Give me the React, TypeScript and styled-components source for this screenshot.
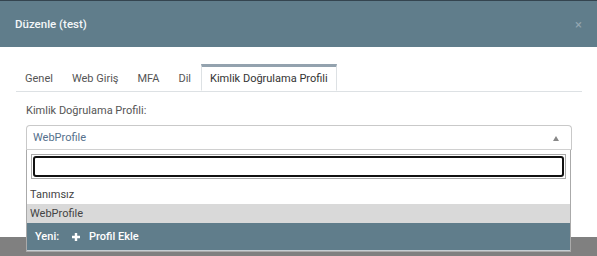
import React from "react";
import styled, { createGlobalStyle } from "styled-components";

const Global = createGlobalStyle`
  html, body { margin: 0; padding: 0; }
  body {
    background: #808080;
    font-family: Roboto, "Liberation Sans", sans-serif;
    width: 597px;
    height: 256px;
    overflow: hidden;
  }
`;

const Modal = styled.div`
  width: 597px;
  height: 237px;
  background: #fff;
  display: flex;
  flex-direction: column;
`;

const Header = styled.div`
  height: 47px;
  box-sizing: border-box;
  border-top: 1px solid #34444f;
  background: #607d8b;
  display: flex;
  align-items: center;
  justify-content: space-between;
  padding: 0 15px 0 15px;
`;

const Title = styled.div`
  color: #f4f7f9;
  font-size: 11.5px;
  font-weight: 500;
`;

const Close = styled.span`
  color: #93a6b0;
  font-size: 13px;
  line-height: 1;
`;

const Body = styled.div`
  padding: 17px 15px 0 16px;
`;

const Tabs = styled.div`
  display: flex;
  border-bottom: 1px solid #dde1e4;
  height: 27px;
`;

const Tab = styled.div<{ $active?: boolean }>`
  box-sizing: border-box;
  height: 27px;
  padding: 0 8px;
  margin-bottom: -1px;
  margin-right: 1px;
  display: flex;
  align-items: center;
  font-size: 11px;
  color: ${(p) => (p.$active ? "#333" : "#555")};
  background: #fff;
  border: 1px solid ${(p) => (p.$active ? "#dde1e4" : "transparent")};
  border-top: 3px solid ${(p) => (p.$active ? "#93a2ae" : "transparent")};
  border-bottom-color: ${(p) => (p.$active ? "#fff" : "transparent")};
`;

const Field = styled.div`
  padding: 12px 10px 0 10px;
`;

const Label = styled.div`
  font-size: 11px;
  color: #555;
  height: 13px;
  line-height: 13px;
  margin-bottom: 8px;
`;

const SelectWrap = styled.div`
  position: relative;
`;

const Select = styled.div`
  box-sizing: border-box;
  height: 25px;
  border: 1px solid #c9c9c9;
  border-bottom-color: #d0d0d0;
  border-radius: 4px 4px 0 0;
  display: flex;
  align-items: center;
  justify-content: space-between;
  padding: 0 12px 0 6px;
  font-size: 11px;
  color: #55708c;
`;

const Arrow = styled.span`
  width: 0;
  height: 0;
  border-left: 3.5px solid transparent;
  border-right: 3.5px solid transparent;
  border-bottom: 5px solid #888;
  margin-top: 1px;
`;

const Dropdown = styled.div`
  position: absolute;
  top: 100%;
  left: 0;
  right: 1px;
  box-sizing: border-box;
  background: #fff;
  border: 1px solid #aaa;
  border-top: none;
  display: flex;
  flex-direction: column;
`;

const SearchBox = styled.div`
  padding: 4px 4px 6px 4px;
`;

const Search = styled.div`
  box-sizing: border-box;
  height: 25px;
  border: 1px solid #aaa;
  padding: 1px;
`;

const SearchInner = styled.div`
  box-sizing: border-box;
  height: 100%;
  border: 2px solid #111;
  border-radius: 3px;
`;

const Option = styled.div<{ $hl?: boolean }>`
  height: 19px;
  display: flex;
  align-items: center;
  padding-left: 3px;
  font-size: 11px;
  color: #444;
  background: ${(p) => (p.$hl ? "#d9d9d9" : "#fff")};
`;

const Footer = styled.div`
  height: 27px;
  background: #607d8b;
  display: flex;
  align-items: center;
  padding-left: 8px;
  color: #fff;
  font-size: 11px;
  font-weight: 500;
  border-bottom: 1px solid #c6ced3;
`;

const AddLink = styled.span`
  display: flex;
  align-items: center;
  gap: 9px;
  margin-left: 13px;
`;

const Plus = () => (
  <svg width="8" height="8" viewBox="0 0 8 8">
    <path d="M4 0v8M0 4h8" stroke="#fff" strokeWidth="2.4" />
  </svg>
);

export default function App() {
  return (
    <>
      <Global />
      <Modal>
        <Header>
          <Title>Düzenle (test)</Title>
          <Close>×</Close>
        </Header>
        <Body>
          <Tabs>
            <Tab>Genel</Tab>
            <Tab>Web Giriş</Tab>
            <Tab>MFA</Tab>
            <Tab>Dil</Tab>
            <Tab $active>Kimlik Doğrulama Profili</Tab>
          </Tabs>
          <Field>
            <Label>Kimlik Doğrulama Profili:</Label>
            <SelectWrap>
              <Select>
                <span>WebProfile</span>
                <Arrow />
              </Select>
              <Dropdown>
                <SearchBox>
                  <Search>
                    <SearchInner />
                  </Search>
                </SearchBox>
                <Option>Tanımsız</Option>
                <Option $hl>WebProfile</Option>
                <Footer>
                  <span>Yeni:</span>
                  <AddLink>
                    <Plus />
                    <span>Profil Ekle</span>
                  </AddLink>
                </Footer>
              </Dropdown>
            </SelectWrap>
          </Field>
        </Body>
      </Modal>
    </>
  );
}
